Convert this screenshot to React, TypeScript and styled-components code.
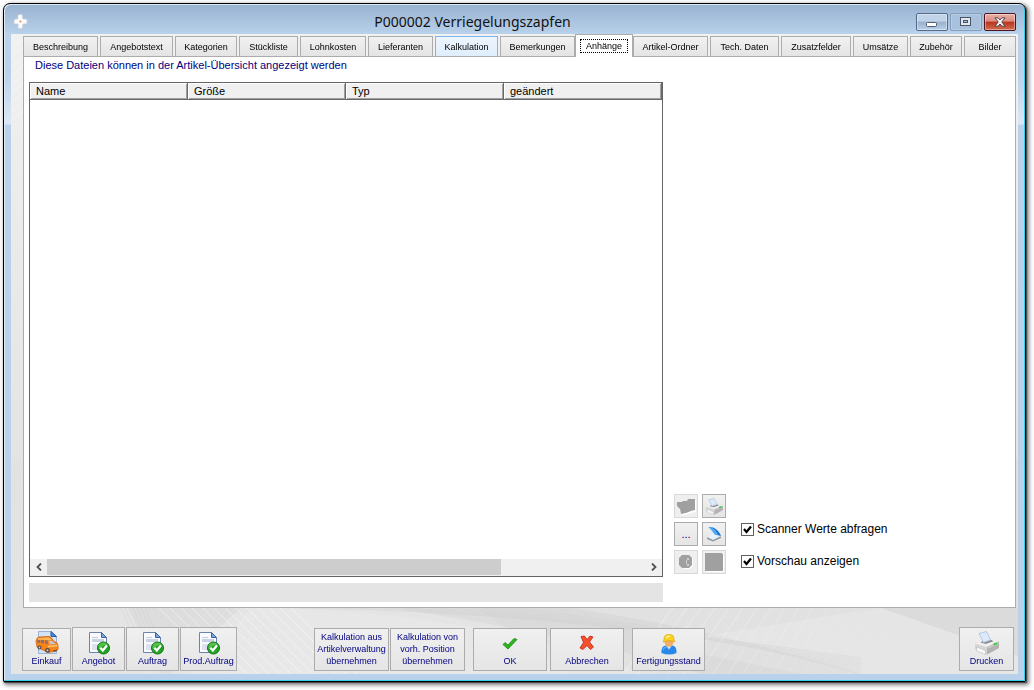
import React from 'react';
import styled, { createGlobalStyle, css } from 'styled-components';

const GlobalStyle = createGlobalStyle`
  *, *::before, *::after { box-sizing: border-box; }
  html, body { height: 100%; margin: 0; background: #fff; }
  body { font-family: "Liberation Sans", Arial, sans-serif; font-size: 11px; color: #000; }
  #root { height: 100%; }
  button { font-family: inherit; margin: 0; padding: 0; }
`;

const Desktop = styled.div`
  display: flex;
  min-height: 100%;
  padding: 3px 8px 8px 3px;
`;

const Frame = styled.div`
  flex: 1;
  min-width: 0;
  display: flex;
  flex-direction: column;
  border: 1px solid #000;
  border-radius: 7px 7px 1px 1px;
  padding: 1px 7px 7px;
  background:
    linear-gradient(#97b2d0 0, #b9d1ea 30px, #b9d1ea 70px, #dbe8f5 120px, #b9d1ea 121px);
  box-shadow: inset -1px -1px 0 #35d0e8, inset 1px 1px 0 #dfeaf5, 1px 1px 1px #444,
    2px 2px 4px 1px rgba(0, 0, 0, 0.5);
`;

const TitleBar = styled.header`
  display: grid;
  grid-template-columns: 20px 1fr 104px;
  align-items: start;
  height: 29px;
`;

const TitleIcon = styled.svg`
  margin: 9px 0 0 2px;
`;

const Title = styled.h1`
  margin: 3px 0 0;
  font: 400 14px/28px "Noto Sans", "Open Sans", sans-serif;
  text-align: center;
  color: #111;
`;

const Caption = styled.div`
  display: flex;
  justify-content: flex-end;
  gap: 2px;
  padding: 8px 2px 0 0;
`;

const CaptionButton = styled.button<{ $kind: 'normal' | 'faded' | 'close' }>`
  display: flex;
  align-items: center;
  justify-content: center;
  width: 32px;
  height: 18px;
  border: 1px solid #536a88;
  border-radius: 2px;
  background: linear-gradient(#c0d3e8 0 45%, #97b0cd 50%, #b9d0ea);
  box-shadow: inset 0 0 0 1px rgba(255, 255, 255, 0.4);
  ${({ $kind }) => $kind === 'faded' && css`
    border-color: #829dbd;
    background: #a8c1dd;
    box-shadow: inset 0 0 0 1px rgba(255, 255, 255, 0.2);
  `}
  ${({ $kind }) => $kind === 'close' && css`
    border-color: #4d1320;
    background: linear-gradient(#e9b0a6 0, #dc8c7f 45%, #b9341e 50%, #cf6c50);
  `}
`;

const Client = styled.main`
  flex: 1;
  position: relative;
  display: flex;
  flex-direction: column;
  padding: 0 2px 0 12px;
  background: linear-gradient(#f1f1f1, #e4e4e4 66%, #dfdfdf 67%, #e2e2e2);
`;

const Backdrop = styled.svg`
  position: absolute;
  inset: 0;
  width: 100%;
  height: 100%;
`;

const Tabs = styled.nav`
  position: relative;
  z-index: 1;
  display: flex;
  align-items: flex-end;
  gap: 2px;
  height: 22px;
`;

const Tab = styled.button<{ $size: number; $state?: 'active' | 'hot' }>`
  flex: ${({ $size }) => `${$size} 1 ${$size}px`};
  min-width: 0;
  height: 21px;
  margin-bottom: -1px;
  border: 1px solid #acacac;
  background: linear-gradient(#f1f1f1, #e4e4e4);
  font-size: 9px;
  line-height: 12px;
  white-space: nowrap;
  color: #000;
  ${({ $state }) => $state === 'hot' && css`
    border-color: #7eb4ea #7eb4ea #acacac;
    background: linear-gradient(#edf5fd, #dfeefd);
  `}
  ${({ $state }) => $state === 'active' && css`
    position: relative;
    height: 23px;
    margin: 0 -2px -1px;
    border-bottom: 0;
    background: #fff;
    span {
      display: block;
      margin: 0 4px 1px;
      border: 1px dotted #000;
      line-height: 12px;
    }
  `}
`;

const Panel = styled.section`
  flex: 1;
  position: relative;
  display: flex;
  flex-direction: column;
  border: 1px solid #acacac;
  background: #fff;
  padding: 1px 0 5px 5px;
`;

const Hint = styled.p`
  margin: 0 0 0 6px;
  line-height: 14px;
  font-size: 11px;
  color: #000080;
`;

const PanelBody = styled.div`
  flex: 1;
  display: flex;
  margin-top: 10px;
`;

const FilesColumn = styled.div`
  flex: 634 1 0;
  min-width: 0;
  display: flex;
  flex-direction: column;
  gap: 6px;
`;

const FileList = styled.div`
  flex: 1;
  display: flex;
  flex-direction: column;
  justify-content: space-between;
  border: 1px solid #646464;
`;

const FileTable = styled.table`
  width: 100%;
  table-layout: fixed;
  border-collapse: separate;
  border-spacing: 0;
  th {
    height: 17px;
    padding: 1px 0 0 6px;
    border: 1px solid #696969;
    border-width: 0 1px 1px 0;
    background: #f0f0f0;
    box-shadow: inset 1px 1px 0 #fff, inset -1px -1px 0 #a0a0a0;
    font-size: 11px;
    line-height: 15px;
    font-weight: 400;
    text-align: left;
  }
`;

const ScrollBar = styled.div`
  display: flex;
  height: 17px;
  padding-bottom: 1px;
  background: #f0f0f0;
`;

const ScrollArrow = styled.button`
  display: flex;
  align-items: center;
  justify-content: center;
  width: 17px;
  border: 0;
  background: none;
`;

const ScrollTrack = styled.div`
  flex: 1;
`;

const ScrollThumb = styled.div`
  width: 76%;
  height: 100%;
  background: #cdcdcd;
`;

const StatusStrip = styled.div`
  height: 19px;
  background: #e4e4e4;
`;

const SideColumn = styled.aside`
  flex: 341 1 0;
  display: flex;
  align-items: flex-end;
  gap: 15px;
  padding: 0 0 28px 11px;
`;

const ToolGrid = styled.div`
  display: grid;
  grid-template-columns: 24px 24px;
  grid-auto-rows: 24px;
  gap: 4px;
`;

const ToolButton = styled.button`
  display: flex;
  align-items: center;
  justify-content: center;
  border: 1px solid #acacac;
  background: linear-gradient(#f1f1f1, #e5e5e5);
  font-size: 11px;
  color: #000080;
  &:disabled { border-color: #d9d9d9; background: #efefef; }
`;

const Options = styled.div`
  display: flex;
  flex-direction: column;
  gap: 16px;
  padding-bottom: 5px;
`;

const Option = styled.label`
  position: relative;
  display: flex;
  align-items: center;
  gap: 3px;
  height: 16px;
  font-size: 12px;
  line-height: 16px;
  white-space: nowrap;
  input {
    appearance: none;
    width: 13px;
    height: 13px;
    margin: 0;
    border: 1px solid #606060;
    background: #fff;
  }
  svg {
    position: absolute;
    left: 0;
    top: 2px;
    pointer-events: none;
    visibility: hidden;
  }
  input:checked + svg { visibility: visible; }
`;

const Footer = styled.footer`
  position: relative;
  display: flex;
  align-items: flex-end;
  height: 66px;
  padding: 0 2px 3px 0;
  margin-left: -1px;
`;

const ButtonGroup = styled.div<{ $gap: number; $before?: string }>`
  display: flex;
  align-items: flex-end;
  gap: ${({ $gap }) => $gap}px;
  margin-left: ${({ $before }) => $before ?? '0'};
`;

const ActionButton = styled.button<{ $width: number; $tall?: boolean }>`
  display: flex;
  flex-direction: column;
  align-items: center;
  justify-content: flex-end;
  width: ${({ $width }) => $width}px;
  height: ${({ $tall }) => ($tall ? 44 : 43)}px;
  padding-bottom: 3px;
  border: 1px solid #acacac;
  background: linear-gradient(#f0f0f0, #e5e5e5);
  font-size: 9px;
  line-height: 12px;
  white-space: nowrap;
  color: #000080;
`;

const tabs: { label: string; size: number; state?: 'active' | 'hot' }[] = [
  { label: 'Beschreibung', size: 75 },
  { label: 'Angebotstext', size: 73 },
  { label: 'Kategorien', size: 62 },
  { label: 'Stückliste', size: 59 },
  { label: 'Lohnkosten', size: 66 },
  { label: 'Lieferanten', size: 65 },
  { label: 'Kalkulation', size: 63, state: 'hot' },
  { label: 'Bemerkungen', size: 75 },
  { label: 'Anhänge', size: 58, state: 'active' },
  { label: 'Artikel-Ordner', size: 75 },
  { label: 'Tech. Daten', size: 69 },
  { label: 'Zusatzfelder', size: 70 },
  { label: 'Umsätze', size: 55 },
  { label: 'Zubehör', size: 52 },
  { label: 'Bilder', size: 52 },
];

const columns = ['Name', 'Größe', 'Typ', 'geändert'];

const range = (n: number) => Array.from({ length: n }, (_, i) => i);

const BackdropArt = () => (
  <Backdrop viewBox="0 0 1007 640" preserveAspectRatio="none" aria-hidden="true">
    <path d="M0 424Q300 440 560 640H0Z" fill="#fff" opacity=".1" />
    <path d="M118 574H230Q200 600 160 640H150Z" fill="#c4c4c4" opacity=".2" />
    <path d="M240 574Q400 576 520 606L640 640H180Z" fill="#fff" opacity=".14" />
    <path d="M380 574H560Q700 594 850 640H690Q560 600 380 574Z" fill="#c4c4c4" opacity=".22" />
    <path d="M870 574H1007V622Z" fill="#d4d4d4" opacity=".45" />
    <path d="M870 574L1007 622V640H790L640 610Z" fill="#fff" opacity=".16" />
    <g stroke="#fff" fill="none" opacity=".42">
      {range(9).map((i) => <path key={i} d={`M0 ${15 + i * 9}L14 ${3 + i * 9}`} />)}
      {range(13).map((i) => <path key={i} d={`M${148 + i * 11} 574l66 66`} />)}
      {range(8).map((i) => <path key={i} d={`M${236 - i * 6} 574l-62 66`} opacity=".4" />)}
      {range(18).map((i) => <path key={i} d={`M${662 + i * 14} 574l${-50 + i} 66`} opacity={1 - i / 19} />)}
    </g>
    <g stroke="#cacaca" fill="none" opacity=".3">
      {range(9).map((i) => <path key={i} d={`M${290 + i * 26} 574Q${520 + i * 20} ${576 + i * 2} 850 ${624 + i * 2}`} />)}
      {range(7).map((i) => <path key={i} d={`M${110 + i * 4} 574l16 36`} />)}
    </g>
  </Backdrop>
);

const DocumentIcon = () => (
  <svg width="22" height="24" viewBox="0 0 22 24" aria-hidden="true">
    <path d="M1.500 1.500h12l5 5v15h-17z" fill="#f8fafd" stroke="#6c83ad" />
    <path d="M13.500 1.500v5h5z" fill="#7ba6de" stroke="#3e62a0" />
    <path d="M4 6.500h6" stroke="#c3cde0" />
    <path d="M4 8h12v3H4z" fill="#c9d2e4" />
    <path d="M4 13h12v6H4z" fill="#dde3ee" />
    <circle cx="15.500" cy="17" r="6" fill="#23a323" stroke="#087a0b" />
    <path d="M10.500 16a5 5 0 0 1 9-2.500Q14 14 11 18z" fill="#6ccc60" opacity=".7" />
    <path d="M12.300 16.800l2.500 2.700 4.200-5.200" fill="none" stroke="#fff" strokeWidth="2.200" />
  </svg>
);

const VanIcon = () => (
  <svg width="24" height="25" viewBox="0 0 24 25" aria-hidden="true">
    <path d="M3.500 1.500h13l5 5v17h-18z" fill="#d3e2f6" stroke="#9ab2d8" />
    <path d="M16 1.500v5h5.500z" fill="#4f86d2" stroke="#2f5ca5" />
    <path d="M1 11Q2 7 4 7l10-.5q2 0 4.500 4.500l3.500 2q1.500 1.500 1 6.500l-2 1.500-8 1.500L2 17z" fill="#f6861c" stroke="#cf5f0c" strokeWidth=".8" />
    <path d="M3 8.200l10.500-.7q2 .3 3 2.500L3 9.800z" fill="#ffb95c" />
    <path d="M2.500 10h2.700v3l-3.200-.5zM6 10h3v3.500l-3-.4zM10 10.200l2.500.2.500 3.600-3-.4z" fill="#8d6f70" />
    <path d="M13.500 10.500l4 .7 3 2.800-5.500.3z" fill="#c9c3d8" />
    <path d="M13 16.500l9.500-1" stroke="#ffc778" strokeWidth="1.300" />
    <circle cx="4.500" cy="17.500" r="2" fill="#54443c" /><circle cx="12.500" cy="20.300" r="2.400" fill="#54443c" />
    <circle cx="4.500" cy="17.500" r=".9" fill="#ccc" /><circle cx="12.500" cy="20.300" r="1.100" fill="#ccc" />
    <path d="M18 20.500l4-.8v1.300l-3.500.8z" fill="#6b4a3a" />
  </svg>
);

const PrinterIcon = ({ size }: { size: number }) => (
  <svg width={size} height={size} viewBox="0 0 24 24" aria-hidden="true">
    <path d="M0 12.500l6-3.500 10-1.500 8 3v6.500L12 23.500 0 18.500z" fill="#d6d6d6" />
    <path d="M0 12.500l6-3.500 10-1.500 8 3-12 5.500z" fill="#efefef" />
    <path d="M5.500 11.500l2-1.500 9-1 2 1.300-8 2.700z" fill="#8b8b8b" />
    <path d="M4 2.500L11.500.5l4 8.500-7 2.500z" fill="#dbeafb" stroke="#a9bfda" strokeWidth=".8" />
    <path d="M12 16v7.500L24 17v-6.500z" fill="#b2b2b2" />
    <path d="M13 17l10-5" stroke="#dadada" />
    <path d="M1.500 16l9 3.500v4L3 20.500l-1.500-1z" fill="#f9f9f9" stroke="#b5b5b5" strokeWidth=".6" />
    <path d="M18.500 12.500l3.500-1.300v1.900l-3.500 1.500z" fill="#35cf35" />
  </svg>
);

const WorkerIcon = () => (
  <svg width="16" height="21" viewBox="0 0 16 21" aria-hidden="true">
    <path d="M.5 19Q0 12 5 11.500h6q5 .5 4.500 7.500-7 3-15 0z" fill="#2787ea" />
    <path d="M2 16q1-3 4-3.500l2 3 2-3" fill="none" stroke="#79bcfa" />
    <path d="M5.500 11.500h5L8 15z" fill="#e6f2fd" />
    <path d="M3.500 6h9q.5 6-4.500 7-5-1-4.500-7z" fill="#f3ae68" />
    <path d="M3 6Q2.500.5 8 .5T13 6l1 1.500Q8 5.500 2 8z" fill="#fbd21e" stroke="#dda30b" strokeWidth=".7" />
    <path d="M5 4q1-2 4-2" stroke="#fff2a0" strokeWidth="1.300" fill="none" />
  </svg>
);

export default function App() {
  return (
    <>
      <GlobalStyle />
      <Desktop>
        <Frame>
          <TitleBar>
            <TitleIcon width="16" height="16" viewBox="0 0 16 16" aria-hidden="true">
              <path d="M5 1l4-.5.500 4.500 4.500.500-.5 4-4 .5-.5 4.500-4-.5.500-4L1 9.500 1.500 5.500 5 5z" fill="#fdfdfd" stroke="#d5dbe2" strokeWidth=".6" />
              <circle cx="7.500" cy="7.500" r="1" fill="#ef7a40" />
            </TitleIcon>
            <Title>P000002 Verriegelungszapfen</Title>
            <Caption>
              <CaptionButton $kind="normal" aria-label="Minimieren">
                <svg width="12" height="10" viewBox="0 0 12 10">
                  <rect x=".5" y="5.500" width="10" height="4" rx="1" fill="#fff" stroke="#555b68" />
                </svg>
              </CaptionButton>
              <CaptionButton $kind="faded" aria-label="Maximieren">
                <svg width="12" height="10" viewBox="0 0 12 10">
                  <rect x=".5" y=".5" width="10" height="8" fill="#dfe6ee" stroke="#4a5568" />
                  <rect x="3.500" y="3.500" width="4" height="2" fill="#a9bcd4" stroke="#4a5568" />
                </svg>
              </CaptionButton>
              <CaptionButton $kind="close" aria-label="Schließen">
                <svg width="12" height="10" viewBox="0 0 12 10">
                  <path d="M1 .8h3l2 2.200L8 .8h3L7.800 5 11 9.200H8L6 7 4 9.200H1L4.200 5z" fill="#f4f4f4" stroke="#5a4652" />
                </svg>
              </CaptionButton>
            </Caption>
          </TitleBar>

          <Client>
            <BackdropArt />
            <Tabs>
              {tabs.map((t) => (
                <Tab key={t.label} $size={t.size} $state={t.state}>
                  <span>{t.label}</span>
                </Tab>
              ))}
            </Tabs>

            <Panel>
              <Hint>Diese Dateien können in der Artikel-Übersicht angezeigt werden</Hint>
              <PanelBody>
                <FilesColumn>
                  <FileList>
                    <FileTable>
                      <thead>
                        <tr>{columns.map((c) => <th key={c} scope="col">{c}</th>)}</tr>
                      </thead>
                    </FileTable>
                    <ScrollBar>
                      <ScrollArrow aria-label="Nach links">
                        <svg width="6" height="8" viewBox="0 0 6 8"><path d="M5 .5L1.500 4 5 7.500" fill="none" stroke="#505050" strokeWidth="1.800" /></svg>
                      </ScrollArrow>
                      <ScrollTrack><ScrollThumb /></ScrollTrack>
                      <ScrollArrow aria-label="Nach rechts">
                        <svg width="6" height="8" viewBox="0 0 6 8"><path d="M1 .5L4.500 4 1 7.500" fill="none" stroke="#505050" strokeWidth="1.800" /></svg>
                      </ScrollArrow>
                    </ScrollBar>
                  </FileList>
                  <StatusStrip />
                </FilesColumn>

                <SideColumn>
                  <ToolGrid>
                    <ToolButton disabled aria-label="Ordner öffnen">
                      <svg width="20" height="18" viewBox="0 0 20 18">
                        <path d="M2 6h3l1-1h5l1-2h8v12l-5 1-6 2H5l-1-5z" fill="#fff" />
                        <path d="M1 5h5l1-1h4l1-2h7v11l-4 1-5 2-5 1-1-5-3-3z" fill="#a0a0a0" />
                      </svg>
                    </ToolButton>
                    <ToolButton aria-label="Drucken"><PrinterIcon size={17} /></ToolButton>
                    <ToolButton>...</ToolButton>
                    <ToolButton aria-label="Scannen">
                      <svg width="16" height="16" viewBox="0 0 16 16">
                        <path d="M1 11.500l6-3 8 2v1.500l-8 3.500-6-2.500z" fill="#8d979f" />
                        <path d="M1 11l6-3.500 8 2.500-8 4z" fill="#e6f1fa" />
                        <path d="M2.500 1l4.500.5Q13 4 15 10L9 8.500Q6 4 2.500 1z" fill="#1b74d2" />
                        <path d="M2.500 1l2.500.3Q10 4 12 9L9 8.500Q6 4 2.500 1z" fill="#53b0f5" />
                      </svg>
                    </ToolButton>
                    <ToolButton disabled aria-label="Aktualisieren">
                      <svg width="16" height="16" viewBox="0 0 16 16">
                        <path d="M5 2h7l3 3v7l-3 3H6l-4-3z" fill="#fff" />
                        <path d="M4 1h7l3 3v7l-3 3H4l-3-3V4z" fill="#a0a0a0" />
                        <path d="M9 5h2M8 7h1M8 9h1M9 11h2" stroke="#fff" />
                      </svg>
                    </ToolButton>
                    <ToolButton disabled aria-label="Speichern">
                      <svg width="20" height="20" viewBox="0 0 20 20">
                        <path d="M2 2h17l1 2v16H2z" fill="#fff" />
                        <path d="M1 1h16l2 1v17H1z" fill="#a0a0a0" />
                      </svg>
                    </ToolButton>
                  </ToolGrid>
                  <Options>
                    {['Scanner Werte abfragen', 'Vorschau anzeigen'].map((label) => (
                      <Option key={label}>
                        <input type="checkbox" defaultChecked />
                        <svg width="13" height="13" viewBox="0 0 13 13">
                          <path d="M3 6l2.500 3L10 3.500" fill="none" stroke="#000" strokeWidth="2.200" />
                        </svg>
                        {label}
                      </Option>
                    ))}
                  </Options>
                </SideColumn>
              </PanelBody>
            </Panel>

            <Footer>
              <ButtonGroup $gap={1}>
                <ActionButton $width={49}><VanIcon />Einkauf</ActionButton>
                <ActionButton $width={53} $tall><DocumentIcon />Angebot</ActionButton>
                <ActionButton $width={53} $tall><DocumentIcon />Auftrag</ActionButton>
                <ActionButton $width={57} $tall><DocumentIcon />Prod.Auftrag</ActionButton>
              </ButtonGroup>
              <ButtonGroup $gap={1} $before="77px">
                <ActionButton $width={75}>
                  <span>Kalkulation aus<br />Artikelverwaltung<br />übernehmen</span>
                </ActionButton>
                <ActionButton $width={75}>
                  <span>Kalkulation von<br />vorh. Position<br />übernehmen</span>
                </ActionButton>
              </ButtonGroup>
              <ButtonGroup $gap={3} $before="8px">
                <ActionButton $width={74}>
                  <svg width="16" height="18" viewBox="0 0 16 18">
                    <path d="M1 7.500l2-2 3 2.500 6-6.500L15 2.500 6 12z" fill="#2fb423" stroke="#168a10" strokeWidth=".8" />
                  </svg>
                  OK
                </ActionButton>
                <ActionButton $width={74}>
                  <svg width="16" height="20" viewBox="0 0 16 20">
                    <path d="M2 1.500l3.500-.5 2.500 3.500 3-3.500 3 1-3.500 5L14.500 12l-3 2.500L8 10.500 4 14.500 1 13l3.500-5.500z" fill="#f4502c" stroke="#bf2313" strokeWidth=".8" />
                  </svg>
                  Abbrechen
                </ActionButton>
              </ButtonGroup>
              <ButtonGroup $gap={0} $before="8px">
                <ActionButton $width={73}><WorkerIcon />Fertigungsstand</ActionButton>
              </ButtonGroup>
              <ButtonGroup $gap={0} $before="auto">
                <ActionButton $width={55} $tall><PrinterIcon size={24} />Drucken</ActionButton>
              </ButtonGroup>
            </Footer>
          </Client>
        </Frame>
      </Desktop>
    </>
  );
}
